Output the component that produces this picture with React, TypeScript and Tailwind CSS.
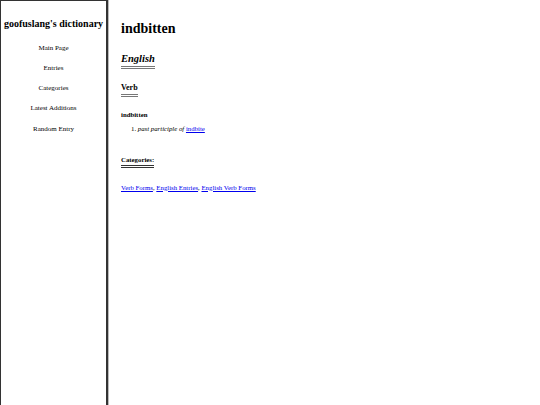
export default function App() {
  const nav = ["Main Page", "Entries", "Categories", "Latest Additions", "Random Entry"];
  return (
    <div className="flex min-h-[405px] bg-white text-black" style={{ fontFamily: '"Liberation Serif", "Times New Roman", serif' }}>
      <aside className="w-[108px] shrink-0 border-l border-t border-r-2 border-[#333] shadow-[1px_0_0_#bbb]">
        <div className="whitespace-nowrap pt-[16px] text-center text-[10px] font-bold leading-[14px]">goofuslang's dictionary</div>
        <nav className="mt-[12.5px] flex flex-col items-center gap-[11.25px] text-[7px] leading-[9px]">
          {nav.map((n) => (
            <span key={n}>{n}</span>
          ))}
        </nav>
      </aside>
      <main className="pl-[13px] pt-[20px]">
        <h1 className="text-[14px] font-bold leading-[18px]">indbitten</h1>
        <h2 className="mt-[15px] inline-block border-b-[3px] border-double border-[#777] pb-[1px] text-[10.5px] font-bold italic leading-[12px]">English</h2>
        <div>
          <h3 className="mt-[14px] inline-block border-b-[3px] border-double border-[#777] pb-[1px] text-[8px] font-bold leading-[10px]">Verb</h3>
        </div>
        <h4 className="mt-[12.5px] text-[6.8px] font-bold leading-[9px]">indbitten</h4>
        <ol className="ml-[10px] mt-[5px] text-[6.8px] leading-[9px]">
          <li>
            1. <i>past participle of</i>{" "}
            <a href="#" className="text-[#0000ee] underline">indbite</a>
          </li>
        </ol>
        <div>
          <h4 className="mt-[22px] inline-block border-b-[3px] border-double border-[#333] pb-[1px] text-[6.8px] font-bold leading-[9px]">Categories:</h4>
        </div>
        <p className="mt-[14px] text-[6.8px] leading-[9px]">
          <a href="#" className="text-[#0000ee] underline">Verb Forms</a>,{" "}
          <a href="#" className="text-[#0000ee] underline">English Entries</a>,{" "}
          <a href="#" className="text-[#0000ee] underline">English Verb Forms</a>
        </p>
      </main>
    </div>
  );
}
